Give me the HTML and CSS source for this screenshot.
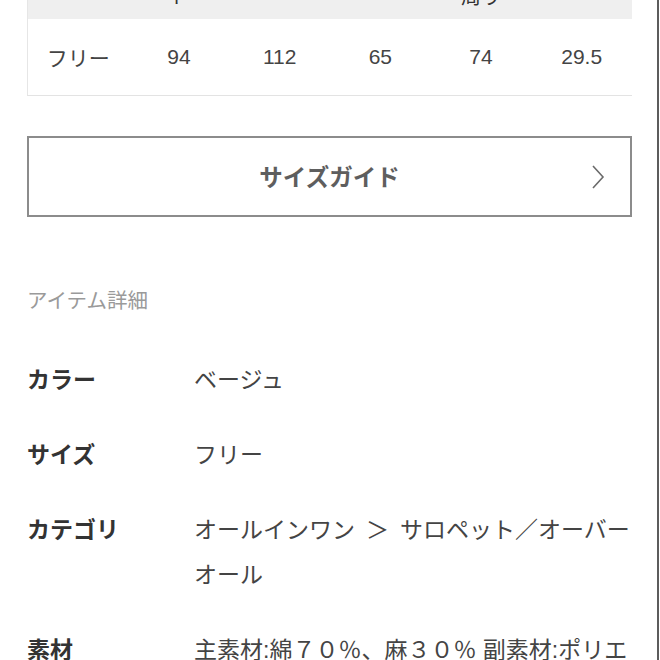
FILE: index.html
```html
<!DOCTYPE html>
<html lang="ja">
<head>
    <meta charset="UTF-8">
    <meta name="viewport" content="width=device-width, initial-scale=1.0">
    <title>アイテム詳細</title>
    <link rel="stylesheet" href="styles.css">
</head>
<body>
    <div class="page">
        <!-- Size table (scrolled, header mostly out of view) -->
        <div class="size-table">
            <div class="size-head">
                <span>サイズ</span>
                <span>ウエスト</span>
                <span>着丈</span>
                <span>股上</span>
                <span>ヒップ周り</span>
                <span>裾幅</span>
            </div>
            <div class="size-row">
                <span>フリー</span>
                <span>94</span>
                <span>112</span>
                <span>65</span>
                <span>74</span>
                <span>29.5</span>
            </div>
        </div>

        <a class="guide-btn" href="#">
            <span class="guide-label">サイズガイド</span>
            <svg class="guide-arrow" width="14" height="24" viewBox="0 0 14 24">
                <polyline points="2,1 12,12 2,23" fill="none" stroke="#6a6a6a" stroke-width="1.6" />
            </svg>
        </a>

        <h3 class="section-title">アイテム詳細</h3>

        <dl class="details">
            <dt>カラー</dt>
            <dd>ベージュ</dd>
            <dt>サイズ</dt>
            <dd>フリー</dd>
            <dt>カテゴリ</dt>
            <dd>オールインワン<span class="sep">＞</span>サロペット／オーバーオール</dd>
            <dt>素材</dt>
            <dd>主素材:綿７０％、麻３０％ 副素材:ポリエステル１００％</dd>
        </dl>
    </div>
</body>
</html>
```

FILE: styles.css
```css
/* General reset */
* {
    margin: 0;
    padding: 0;
    box-sizing: border-box;
}

body {
    font-family: "Liberation Sans", "Noto Sans CJK JP", sans-serif;
    background-color: #fff;
    color: #333;
    overflow: hidden;
}

.page {
    width: 659px;
    height: 660px;
    padding: 0 25px 0 27px;
    border-right: 2px solid #5c5c5c;
    overflow: hidden;
}

/* Size table */
.size-table {
    margin-top: -49px;
    border-left: 1px solid #e6e6e6;
    border-bottom: 1px solid #e3e3e3;
}

.size-head,
.size-row {
    display: grid;
    grid-template-columns: repeat(6, 1fr);
    align-items: center;
    text-align: center;
}

.size-head {
    background-color: #efefef;
    padding: 10px 0;
}

.size-head span {
    padding: 0 18px;
    font-size: 20px;
    line-height: 24px;
    color: #333;
}

.size-row {
    height: 76px;
    font-size: 21px;
    color: #444;
}

/* Size guide button */
.guide-btn {
    display: grid;
    grid-template-columns: 1fr auto 1fr;
    align-items: center;
    height: 81px;
    margin-top: 40px;
    border: 2px solid #8c8c8c;
    text-decoration: none;
}

.guide-label {
    grid-column: 2;
    font-size: 23.5px;
    line-height: 30px;
    margin-top: 3px;
    font-weight: 700;
    color: #5e5e5e;
}

.guide-arrow {
    grid-column: 3;
    justify-self: end;
    margin-right: 25px;
}

/* Item details */
.section-title {
    margin-top: 70px;
    font-size: 20.5px;
    line-height: 28px;
    font-weight: 400;
    color: #9a9a9a;
}

.details {
    display: grid;
    grid-template-columns: 167px 1fr;
    row-gap: 30px;
    margin-top: 43px;
    font-size: 23px;
    line-height: 45px;
}

.details dt {
    font-weight: 700;
    color: #333;
}

.details dd {
    color: #444;
}

.details .sep {
    margin: 0 11px;
}
```
